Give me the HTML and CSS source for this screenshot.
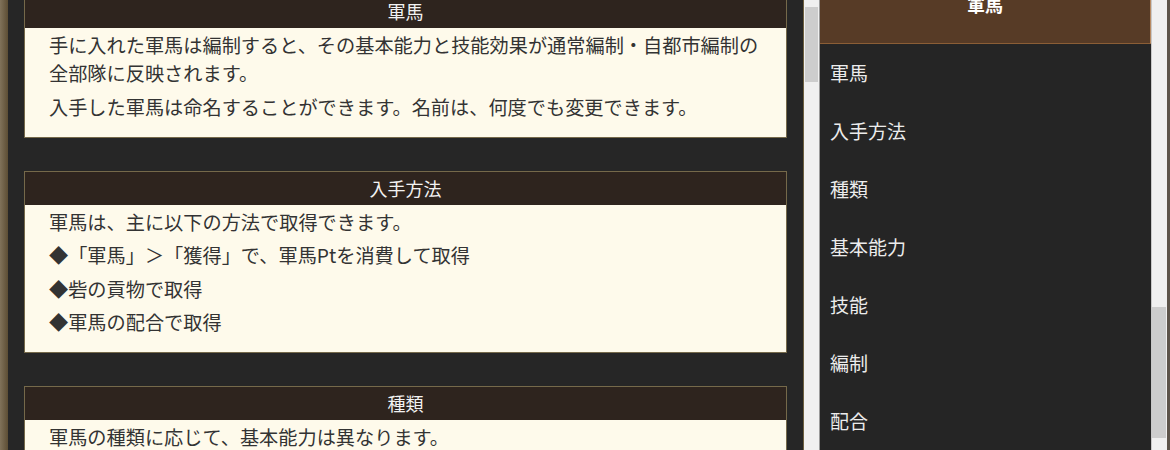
FILE: index.html
```html
<!DOCTYPE html>
<html lang="ja">
<head>
  <meta charset="UTF-8">
  <title>軍馬</title>
  <meta name="viewport" content="width=device-width, initial-scale=1.0"/>
  <link rel="stylesheet" href="styles.css">
</head>
<body>
  <div class="frame-left"></div>

  <div class="main">
    <div class="card first">
      <div class="card-head">軍馬</div>
      <div class="card-body">
        <p>手に入れた軍馬は編制すると、その基本能力と技能効果が通常編制・自都市編制の全部隊に反映されます。</p>
        <p>入手した軍馬は命名することができます。名前は、何度でも変更できます。</p>
      </div>
    </div>

    <div class="card">
      <div class="card-head">入手方法</div>
      <div class="card-body">
        <p>軍馬は、主に以下の方法で取得できます。</p>
        <p>◆「軍馬」＞「獲得」で、軍馬Ptを消費して取得</p>
        <p>◆砦の貢物で取得</p>
        <p>◆軍馬の配合で取得</p>
      </div>
    </div>

    <div class="card">
      <div class="card-head">種類</div>
      <div class="card-body">
        <p>軍馬の種類に応じて、基本能力は異なります。</p>
      </div>
    </div>
  </div>

  <div class="scrollbar main-bar"><div class="thumb"></div></div>

  <div class="nav">
    <div class="nav-head"><span>軍馬</span></div>
    <ul class="nav-list">
      <li>軍馬</li>
      <li>入手方法</li>
      <li>種類</li>
      <li>基本能力</li>
      <li>技能</li>
      <li>編制</li>
      <li>配合</li>
    </ul>
  </div>

  <div class="scrollbar nav-bar"><div class="thumb"></div></div>

  <div class="frame-right"></div>
</body>
</html>
```

FILE: styles.css
```css
html, body {
  margin: 0;
  height: 450px;
  overflow: hidden;
}
body {
  display: flex;
  background-color: #262626;
  font-family: "Noto Sans CJK JP", "Noto Sans", sans-serif;
}
.frame-left {
  width: 8px;
  flex: none;
  background: linear-gradient(to right, #80725a, #5c4d34);
}
.frame-right {
  width: 3px;
  flex: none;
  background-color: #5d544a;
}

/* 本文 */
.main {
  width: 763px;
  flex: none;
  padding: 0 16px;
  background-color: #262626;
}
.card {
  border: 1px solid #75694a;
  margin-bottom: 33px;
}
.card.first {
  margin-top: -6px;
}
.card-head {
  height: 33px;
  line-height: 33px;
  background-color: #2e241e;
  color: #f2f2f2;
  text-align: center;
  font-size: 18px;
}
.card-body {
  background-color: #fefaeb;
  color: #333;
  padding: 3px 24px 10.5px;
  font-size: 19.2px;
  line-height: 28.4px;
}
.card-body p {
  margin: 0 0 5px;
}

/* スクロールバー */
.scrollbar {
  flex: none;
  background-color: #f0f0f0;
  box-sizing: border-box;
}
.thumb {
  background-color: #cdcdcd;
}
.main-bar {
  width: 17px;
  border-left: 1px solid #6d6040;
  border-right: 1px solid #9a9a9a;
  padding: 7px 1px 0 1px;
}
.main-bar .thumb {
  height: 75px;
}
.nav-bar {
  width: 16px;
  border-left: 1px solid #c8c8c8;
  padding: 307px 1px 0 0;
}
.nav-bar .thumb {
  height: 131px;
}

/* 目次 */
.nav {
  width: 331px;
  flex: none;
  background-color: #252525;
  color: #ececec;
}
.nav-head {
  display: flow-root;
  height: 43px;
  background-color: #573b26;
  border-bottom: 1px solid #8b5e36;
  border-right: 1px solid #b88a62;
  text-align: center;
  font-size: 18px;
  font-weight: bold;
  color: #fff;
}
.nav-head span {
  display: block;
  margin-top: -9px;
  line-height: 26px;
}
.nav-list {
  list-style: none;
  margin: 0;
  padding: 0;
}
.nav-list li {
  height: 58px;
  line-height: 58px;
  padding-left: 10px;
  font-size: 19px;
}
```
